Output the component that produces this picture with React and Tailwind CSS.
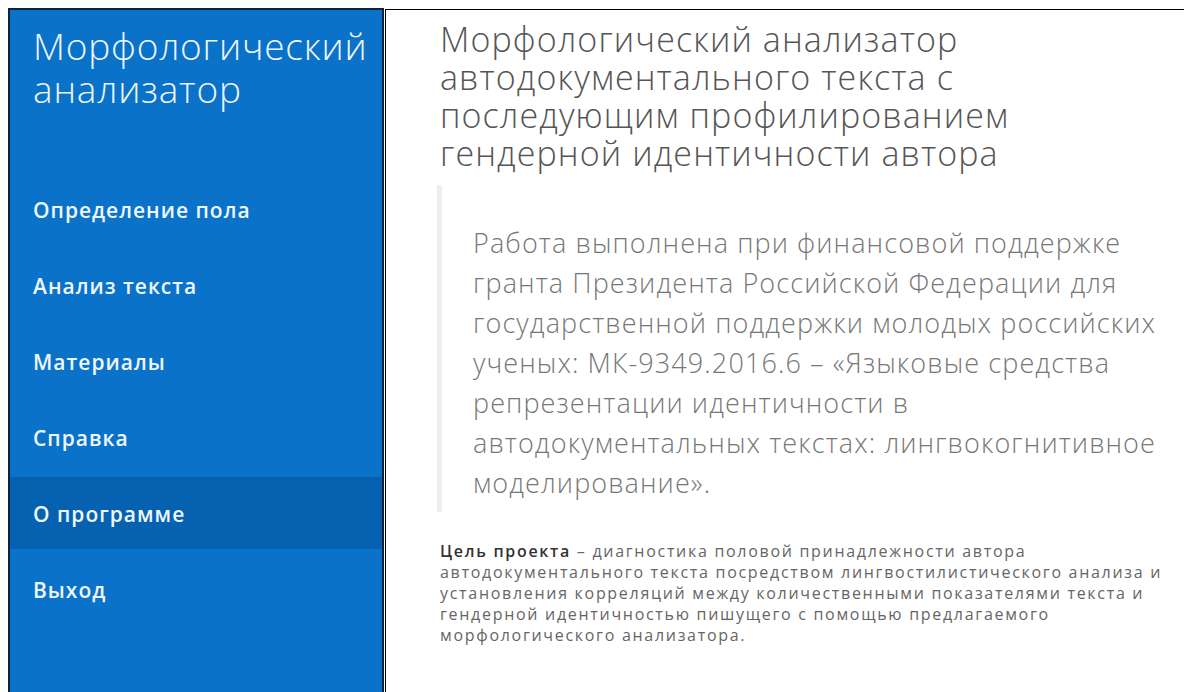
import React from 'react';

const navItems = [
  { label: 'Определение пола' },
  { label: 'Анализ текста' },
  { label: 'Материалы' },
  { label: 'Справка' },
  { label: 'О программе', active: true },
  { label: 'Выход' },
];

const Sidebar = () => (
  <aside className="w-[376px] h-[700px] shrink-0 border-2 border-[#0c2340] bg-[#0a72c8] text-[#eef6ff]">
    <h1 className="pl-[23px] pt-[14px] text-[37px] leading-[43px] font-light tracking-[0.8px]">
      Морфологический
      <br />
      анализатор
    </h1>
    <nav className="mt-[63px] flex flex-col gap-[4px]">
      {navItems.map((item) => (
        <a
          key={item.label}
          href="#"
          className={`flex h-[72px] items-center pt-[3px] pl-[23px] text-[21px] font-semibold tracking-[1px] ${
            item.active ? 'bg-[#0662b0]' : ''
          }`}
        >
          {item.label}
        </a>
      ))}
    </nav>
  </aside>
);

const Content = () => (
  <main className="mt-[1px] ml-[1px] flex-1 border-l border-t border-black bg-white pl-[54px]">
    <h2 className="mt-[10px] w-[620px] text-[34px] leading-[38px] font-light tracking-[1.1px] text-[#555]">
      Морфологический анализатор автодокументального текста с последующим профилированием гендерной
      идентичности автора
    </h2>
    <blockquote className="mt-[13px] -ml-[3px] border-l-[5px] border-[#eeeeee] pl-[31px] pt-[38px] pb-[9px]">
      <p className="w-[700px] text-[27px] leading-[40px] font-light tracking-[1.1px] text-[#777]">
        Работа выполнена при финансовой поддержке гранта Президента Российской Федерации для
        государственной поддержки молодых российских ученых: МК-9349.2016.6 – «Языковые средства
        репрезентации идентичности в автодокументальных текстах: лингвокогнитивное моделирование».
      </p>
    </blockquote>
    <p className="mt-[29px] w-[745px] text-[16px] leading-[21px] tracking-[1.7px] text-[#666]">
      <b className="font-semibold text-[#333]">Цель проекта</b> – диагностика половой принадлежности
      автора автодокументального текста посредством лингвостилистического анализа и установления
      корреляций между количественными показателями текста и гендерной идентичностью пишущего с
      помощью предлагаемого морфологического анализатора.
    </p>
  </main>
);

export default function App() {
  return (
    <div
      className="flex h-[692px] overflow-hidden bg-white pt-[8px] pl-[8px]"
      style={{ fontFamily: '"Open Sans", "Noto Sans", sans-serif' }}
    >
      <Sidebar />
      <Content />
    </div>
  );
}
